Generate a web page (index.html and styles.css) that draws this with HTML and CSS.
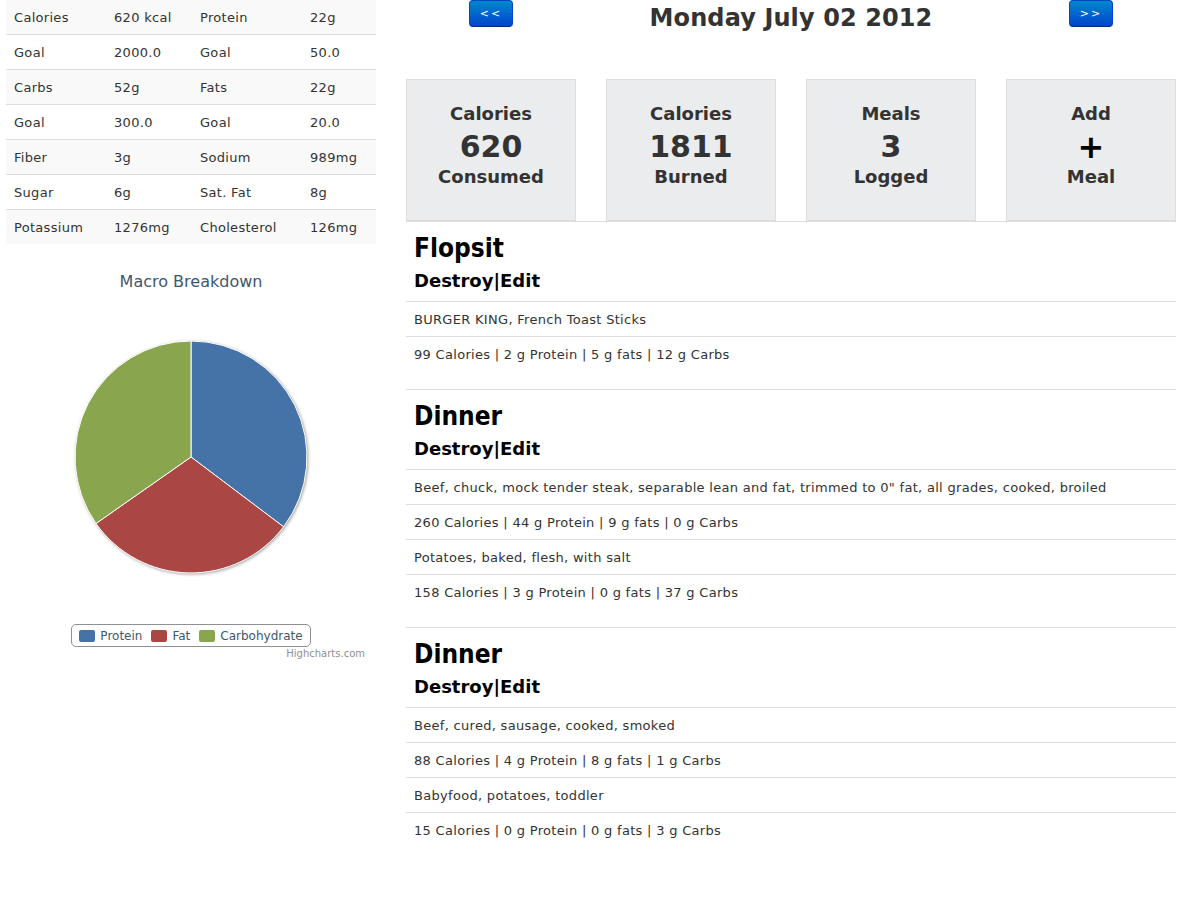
FILE: index.html
```html
<!DOCTYPE html>
<html>
<head>
<meta charset="utf-8">
<title>Daily Log</title>
<link rel="stylesheet" href="styles.css">
</head>
<body>
<div class="page">
  <aside class="side">
    <table class="nutrition">
      <colgroup><col class="c1"><col class="c2"><col class="c3"><col class="c4"></colgroup>
      <tbody>
        <tr><td>Calories</td><td>620 kcal</td><td>Protein</td><td>22g</td></tr>
        <tr><td>Goal</td><td>2000.0</td><td>Goal</td><td>50.0</td></tr>
        <tr><td>Carbs</td><td>52g</td><td>Fats</td><td>22g</td></tr>
        <tr><td>Goal</td><td>300.0</td><td>Goal</td><td>20.0</td></tr>
        <tr><td>Fiber</td><td>3g</td><td>Sodium</td><td>989mg</td></tr>
        <tr><td>Sugar</td><td>6g</td><td>Sat. Fat</td><td>8g</td></tr>
        <tr><td>Potassium</td><td>1276mg</td><td>Cholesterol</td><td>126mg</td></tr>
      </tbody>
    </table>
    <div class="chart">
      <div class="chart-title">Macro Breakdown</div>
      <svg class="pie" width="370" height="250" viewBox="0 0 370 250">
        <g class="slices">
          <path fill="#4572A7" stroke="#fff" stroke-width="1" d="M185,120 L185,4 A116,116 0 0 1 277.6,189.8 Z"/>
          <path fill="#AA4643" stroke="#fff" stroke-width="1" d="M185,120 L277.6,189.8 A116,116 0 0 1 90,186.5 Z"/>
          <path fill="#89A54E" stroke="#fff" stroke-width="1" d="M185,120 L90,186.5 A116,116 0 0 1 185,4 Z"/>
        </g>
      </svg>
      <div class="legend-wrap">
        <div class="legend">
          <span class="item"><span class="swatch protein"></span>Protein</span>
          <span class="item"><span class="swatch fat"></span>Fat</span>
          <span class="item"><span class="swatch carb"></span>Carbohydrate</span>
        </div>
      </div>
      <div class="credits">Highcharts.com</div>
    </div>
  </aside>
  <main class="main">
    <div class="nav-row">
      <div class="nav-cell"><a class="btn">&lt;&lt;</a></div>
      <div class="nav-title">Monday July 02 2012</div>
      <div class="nav-cell"><a class="btn">&gt;&gt;</a></div>
    </div>
    <div class="stats">
      <div class="stat"><div class="lbl">Calories</div><div class="num">620</div><div class="lbl">Consumed</div></div>
      <div class="stat"><div class="lbl">Calories</div><div class="num">1811</div><div class="lbl">Burned</div></div>
      <div class="stat"><div class="lbl">Meals</div><div class="num">3</div><div class="lbl">Logged</div></div>
      <div class="stat"><div class="lbl">Add</div><div class="num plus">+</div><div class="lbl">Meal</div></div>
    </div>

    <section class="meal">
      <div class="meal-head">
        <h2>Flopsit</h2>
        <div class="actions"><a>Destroy</a>|<a>Edit</a></div>
      </div>
      <div class="row">BURGER KING, French Toast Sticks</div>
      <div class="row">99 Calories | 2 g Protein | 5 g fats | 12 g Carbs</div>
    </section>

    <section class="meal">
      <div class="meal-head">
        <h2>Dinner</h2>
        <div class="actions"><a>Destroy</a>|<a>Edit</a></div>
      </div>
      <div class="row">Beef, chuck, mock tender steak, separable lean and fat, trimmed to 0" fat, all grades, cooked, broiled</div>
      <div class="row">260 Calories | 44 g Protein | 9 g fats | 0 g Carbs</div>
      <div class="row">Potatoes, baked, flesh, with salt</div>
      <div class="row">158 Calories | 3 g Protein | 0 g fats | 37 g Carbs</div>
    </section>

    <section class="meal">
      <div class="meal-head">
        <h2>Dinner</h2>
        <div class="actions"><a>Destroy</a>|<a>Edit</a></div>
      </div>
      <div class="row">Beef, cured, sausage, cooked, smoked</div>
      <div class="row">88 Calories | 4 g Protein | 8 g fats | 1 g Carbs</div>
      <div class="row">Babyfood, potatoes, toddler</div>
      <div class="row">15 Calories | 0 g Protein | 0 g fats | 3 g Carbs</div>
    </section>
  </main>
</div>
</body>
</html>
```

FILE: styles.css
```css
* { box-sizing: border-box; }
html, body { margin: 0; padding: 0; background: #fff; }
body {
  font-family: "DejaVu Sans", Verdana, sans-serif;
  font-size: 13px;
  line-height: 18px;
  letter-spacing: 0.3px;
  color: #333;
}
.page {
  display: flex;
  gap: 30px;
  padding-left: 6px;
  align-items: flex-start;
}
.side { width: 370px; flex: none; }
.main { width: 770px; flex: none; }

/* nutrition table */
.nutrition { width: 370px; border-collapse: collapse; table-layout: fixed; }
.nutrition .c1 { width: 100px; }
.nutrition .c2 { width: 86px; }
.nutrition .c3 { width: 110px; }
.nutrition .c4 { width: 74px; }
.nutrition td {
  padding: 9px 8px 7px;
  line-height: 18px;
  border-top: 1px solid #ddd;
  white-space: nowrap;
  vertical-align: top;
}
.nutrition tr:first-child td { border-top: 0; height: 34px; }
.nutrition tr:nth-child(odd) td { background: #f9f9f9; }

/* chart */
.chart { letter-spacing: 0; }
.chart-title {
  margin-top: 28px;
  text-align: center;
  font-size: 16px;
  line-height: 20px;
  color: #3E576F;
}
.pie { display: block; margin-top: 45px; }
.slices { filter: drop-shadow(1px 1px 1.5px rgba(0,0,0,0.35)); }
.legend-wrap { display: flex; justify-content: center; margin-top: 37px; }
.legend {
  display: flex;
  align-items: center;
  gap: 9px;
  height: 23px;
  padding: 0 7px 0 7px;
  border: 1px solid #909090;
  border-radius: 5px;
  font-size: 12px;
  letter-spacing: 0;
  color: #3E576F;
}
.item { display: flex; align-items: center; gap: 5px; }
.swatch { width: 16px; height: 12px; border-radius: 2px; display: inline-block; }
.swatch.protein { background: #4572A7; }
.swatch.fat { background: #AA4643; }
.swatch.carb { background: #89A54E; }
.credits {
  text-align: right;
  padding-right: 11px;
  margin-top: 1px;
  font-size: 10px;
  line-height: 12px;
  color: #909090;
}

/* nav */
.nav-row { display: flex; gap: 30px; height: 79px; }
.nav-cell { width: 170px; display: flex; justify-content: center; align-items: flex-start; }
.nav-title {
  width: 370px;
  padding-top: 1px;
  text-align: center;
  font-size: 24px;
  line-height: 34px;
  font-weight: bold;
  letter-spacing: 0.1px;
  color: #333;
}
.btn {
  display: block;
  width: 44px;
  height: 27px;
  line-height: 25px;
  text-align: center;
  font-size: 11px;
  letter-spacing: 2px;
  color: #fff;
  background: linear-gradient(#0088cc, #0044cc);
  border: 1px solid #0044cc;
  border-bottom-color: #002a80;
  border-radius: 4px;
  cursor: pointer;
}

/* stats */
.stats { display: flex; gap: 30px; }
.stat {
  width: 170px;
  height: 142px;
  background: #ebeced;
  border: 1px solid #dedede;
  padding-top: 19px;
  text-align: center;
  font-weight: bold;
  letter-spacing: 0;
  color: #333;
}
.stat .lbl { font-size: 18px; line-height: 30px; }
.stat .lbl:last-child { line-height: 24px; }
.stat .num { font-size: 30px; line-height: 36px; }
.stat .plus { color: #000; font-size: 32px; }

/* meals */
.meal { border-top: 1px solid #ddd; margin-bottom: 18px; }
.meal-head { padding: 11px 8px 8px; color: #000; letter-spacing: 0; }
.meal-head h2 {
  margin: 0;
  font-family: "DejaVu Sans Condensed", "DejaVu Sans", sans-serif;
  font-size: 26px;
  line-height: 30px;
  font-weight: bold;
}
.actions { margin-top: 6px; font-size: 18px; line-height: 24px; font-weight: bold; }
.actions a { color: #000; cursor: pointer; }
.row {
  border-top: 1px solid #ddd;
  padding: 9px 8px 7px;
  line-height: 18px;
}
```
